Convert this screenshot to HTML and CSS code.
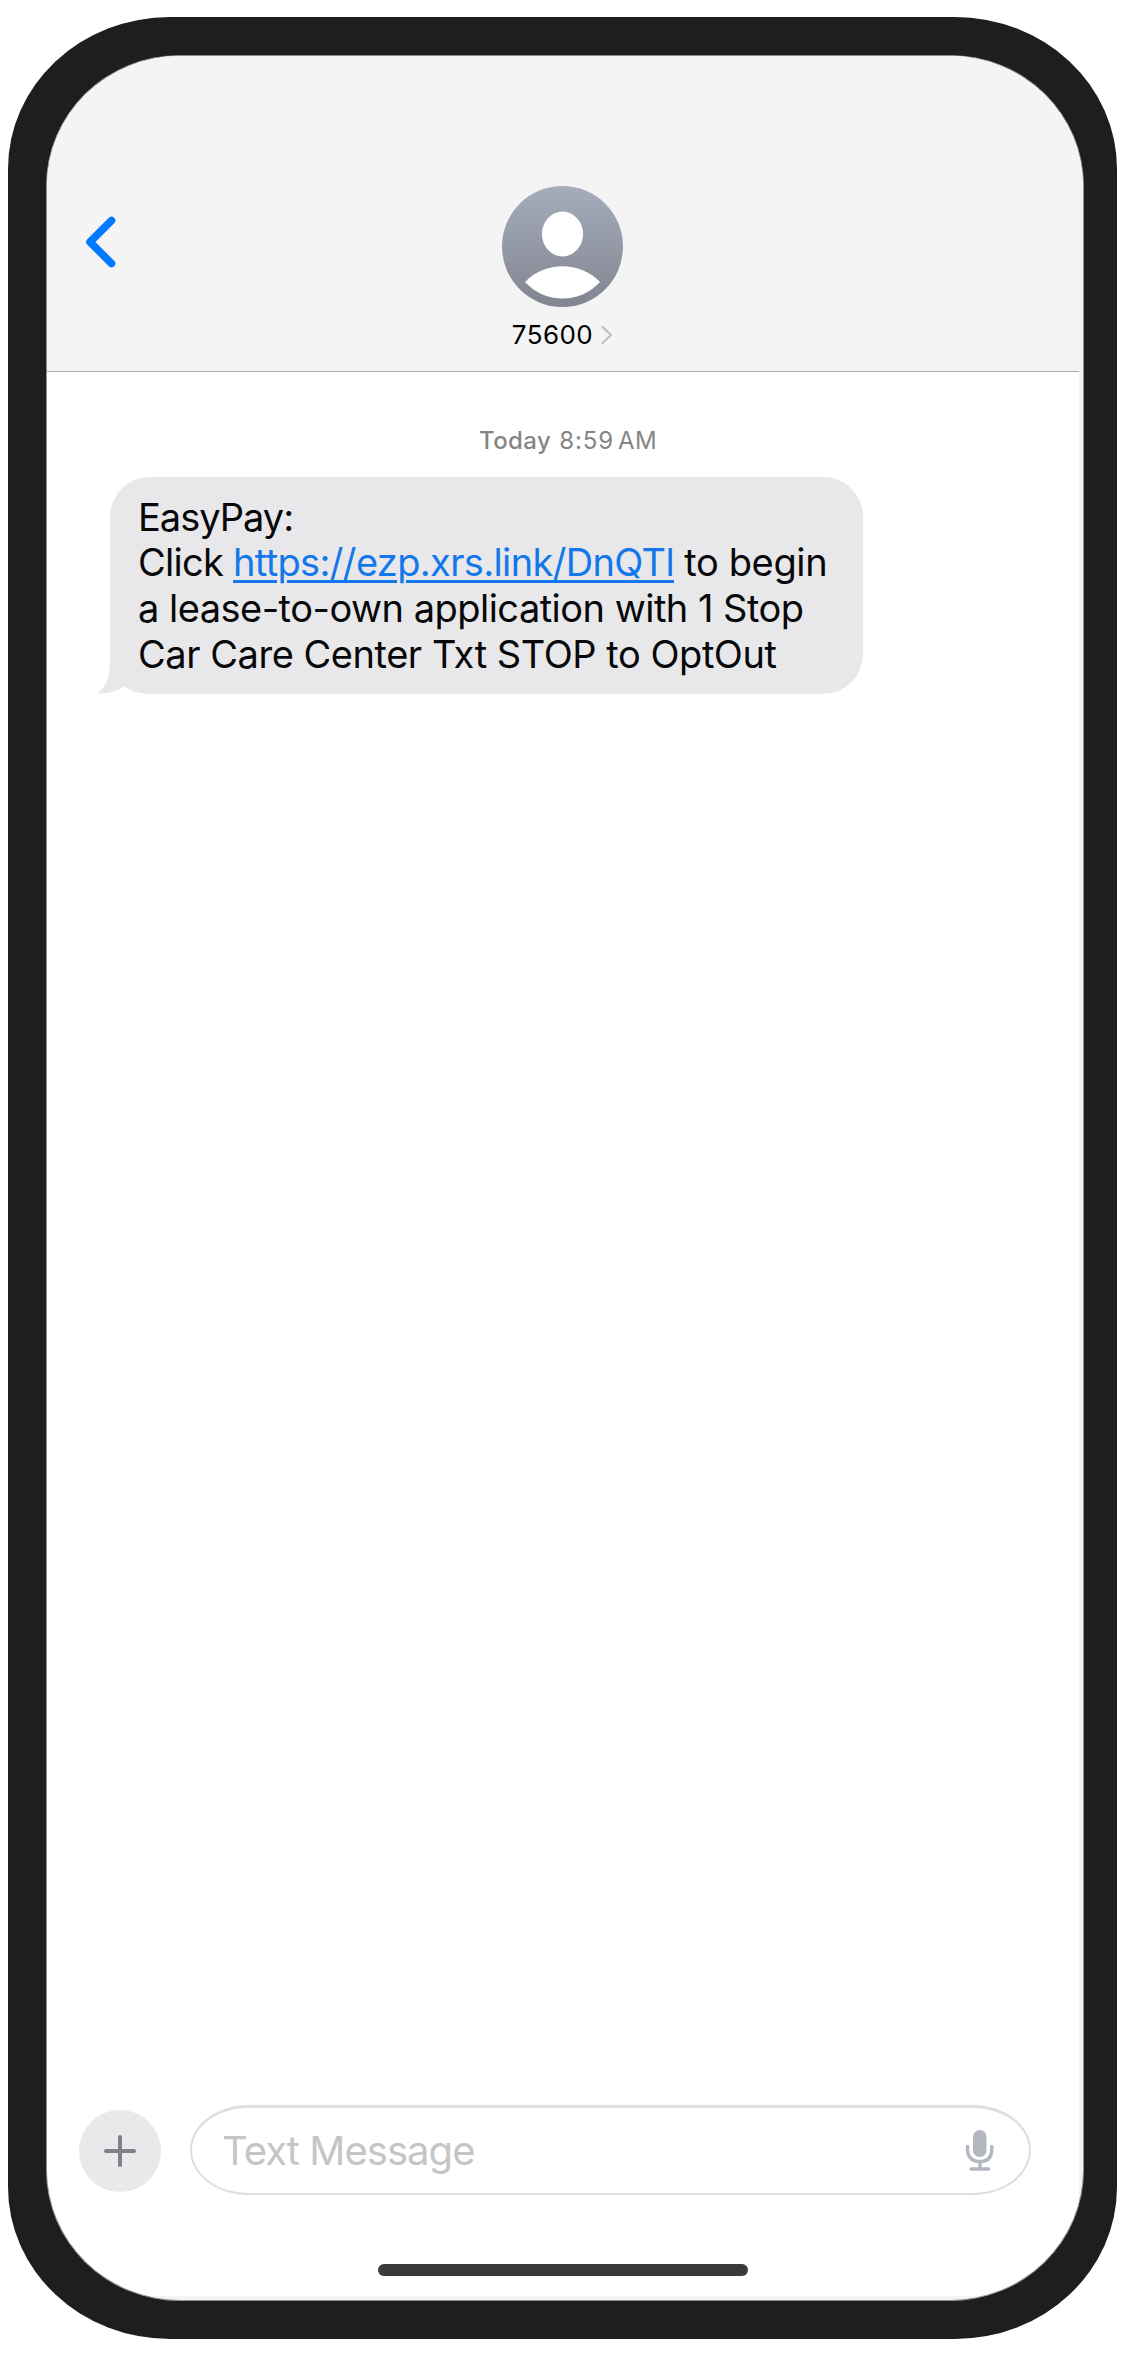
FILE: index.html
```
<!DOCTYPE html>
<html lang="en">
<head>
<meta charset="utf-8">
<title>Messages</title>
<link rel="stylesheet" href="styles.css">
</head>
<body>
<main class="phone">
  <div class="screen">
    <header class="header">
      <svg class="back" viewBox="0 0 34 54" aria-label="Back"><path d="M27.500 5.500 6 27l21.500 21.500"/></svg>
      <div class="contact">
        <svg class="avatar" viewBox="0 0 121 121">
          <defs><linearGradient id="shade" x1="0" y1="0" x2="0" y2="1"><stop offset="0" stop-color="#a5adbb"/><stop offset="1" stop-color="#828590"/></linearGradient></defs>
          <circle cx="60.5" cy="60.5" r="60.5" fill="url(#shade)"/>
          <ellipse cx="60.5" cy="48" rx="20.6" ry="22.4" fill="#fff"/>
          <path d="M23 96C43 75 78 75 98 96 78 118 43 118 23 96Z" fill="#fff"/>
        </svg>
        <div class="name"><span>75600</span><svg class="more" viewBox="0 0 12 20"><path d="M1.500 2 10 10 1.500 18"/></svg></div>
      </div>
    </header>
    <section class="thread">
      <p class="stamp"><b>Today</b><span class="time">8:59</span><span class="half">AM</span></p>
      <div class="bubble">
        <svg class="tail" viewBox="0 0 60 50"><path d="M13 0V16C13 32 10 43 0 49.500 10 50 20 48 27 42 34 48 44 50 60 50V0Z"/></svg>
        <p class="line l1">EasyPay:</p>
        <p class="line l2"><span class="before">Click </span><a>https://ezp.xrs.link/DnQTl</a><span class="after"> to begin</span></p>
        <p class="line l3">a lease-to-own application with 1 Stop</p>
        <p class="line l4">Car Care Center Txt STOP to OptOut</p>
      </div>
    </section>
    <footer class="composer">
      <div class="add"><svg viewBox="0 0 34 34"><path d="M17 3V31M3 17H31"/></svg></div>
      <div class="field">
        <span class="placeholder">Text Message</span>
        <svg class="mic" viewBox="0 0 30 42"><rect x="8" y="0" width="13.500" height="27" rx="6.700"/><path d="M2.500 16.500V19C2.500 27 7 31.500 15 31.500S26.800 27 26.800 19V16.500M15 31.500V39M6 39H23.500"/></svg>
      </div>
    </footer>
    <div class="home"></div>
  </div>
</main>
</body>
</html>
```
FILE: styles.css
```
* { box-sizing: border-box; }
body { margin: 0; background: #fff; font-family: Inter, "Liberation Sans", sans-serif; color: #08080a; }
p { margin: 0; }
svg { display: block; fill: none; stroke-linecap: round; stroke-linejoin: round; }

.phone {
  width: 1109px; height: 2322px; margin: 17px 0 17px 8px;
  padding: 38px 33px 38px 38px;
  background: #1e1e1c; border-radius: 162px / 152px;
}
.screen {
  height: 2246px; display: flex; flex-direction: column;
  background: linear-gradient(#fff, #fff) 0 0 / calc(100% - 4px) calc(100% - 4px) no-repeat #f4f4f4;
  overflow: hidden;
  border: 1px solid #8f8f8d; border-radius: 134px / 131px;
}
.header {
  height: 315px; flex: none; padding: 130px 0 0;
  display: grid; grid-template-columns: 455px 121px 1fr;
  background: #f4f4f4;
}
.back { width: 34px; height: 54px; margin: 29px 0 0 37px; stroke: #007aff; stroke-width: 7.6; }
.contact { display: flex; flex-direction: column; align-items: center; }
.avatar { width: 121px; height: 121px; }
.name { display: flex; align-items: center; gap: 8px; margin-top: 12px; font-size: 26px; line-height: 32px; color: #000; }
.name span { letter-spacing: .45px; }
.more { width: 12px; height: 20px; stroke: #bfbfc1; stroke-width: 2.2; }

.thread { flex: 1; margin-right: 4px; border-top: 1px solid #ababab; padding: 53px 0 0 63px; }
.stamp { display: flex; padding-left: 369px; white-space: nowrap; font-size: 24px; line-height: 32px; color: #858585; }
.stamp b { font-weight: 500; letter-spacing: .4px; }
.time { margin-left: 8px; letter-spacing: .9px; }
.half { margin-left: 4px; letter-spacing: .3px; }
.bubble { position: relative; width: 753px; height: 217px; margin-top: 20px; padding: 18px 0 0 28px; border-radius: 40px; background: #e8e8ea; }
.tail { position: absolute; left: -13px; bottom: 0; width: 60px; height: 50px; fill: #e8e8ea; }
.line { position: relative; height: 45.7px; line-height: 45.7px; font-size: 38px; white-space: pre; }
.l1 { letter-spacing: -1px; }
.l2 { line-height: 43.7px; }
.l2 .before { letter-spacing: -.73px; }
.l2 a { letter-spacing: -.65px; color: #1477ea; text-decoration: underline; text-decoration-thickness: 3px; text-underline-offset: 4px; }
.l2 .after { letter-spacing: -.38px; }
.l3 { letter-spacing: -.52px; }
.l4 { letter-spacing: -.46px; }

.composer { flex: none; display: flex; align-items: center; gap: 29px; height: 90px; margin: 0 52px 69px 32px; }
.add { width: 82px; height: 82px; margin-top: 1px; border-radius: 50%; background: #e8e9eb; display: grid; place-items: center; }
.add svg { width: 34px; height: 34px; stroke: #808188; stroke-width: 4; }
.field { flex: 1; height: 90px; display: flex; align-items: center; justify-content: space-between; padding: 0 34px 0 30px; border: 2px solid #dedede; border-top-width: 3px; border-radius: 58px / 45px; }
.placeholder { font-size: 40px; line-height: 48px; letter-spacing: -.96px; color: #c5c5c5; }
.mic { width: 30px; height: 42px; stroke: #b1b6bf; stroke-width: 3.400; }
.mic rect { fill: #b1b6bf; stroke: none; }
.home { flex: none; width: 370px; height: 12px; margin: 0 0 24px 331px; border-radius: 6px; background: #3a3a3a; }
```
